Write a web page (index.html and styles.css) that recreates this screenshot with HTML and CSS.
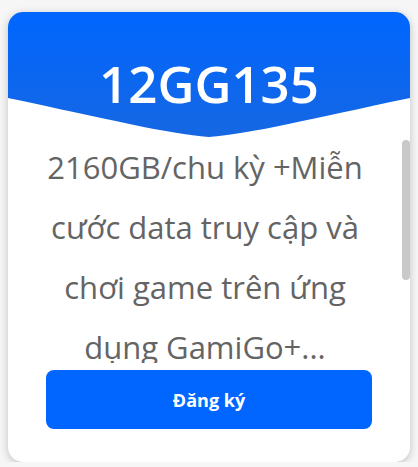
FILE: index.html
```html
<!DOCTYPE html>
<html lang="vi">

<head>
    <meta charset="UTF-8">
    <meta name="viewport" content="width=device-width, initial-scale=1.0">
    <title>12GG135</title>
    <link rel="stylesheet" href="styles.css">
</head>

<body>
    <div class="card">
        <div class="card-head">
            <h2>12GG135</h2>
        </div>
        <div class="card-body">
            <p>2160GB/chu kỳ +Miễn cước data truy cập và chơi game trên ứng dụng GamiGo+...</p>
        </div>
        <span class="scroll-thumb"></span>
        <div class="card-foot">
            <button class="btn">Đăng ký</button>
        </div>
    </div>
</body>

</html>
```

FILE: styles.css
```css
* {
    box-sizing: border-box;
    margin: 0;
    padding: 0;
}

body {
    background: #f6f6f6;
    padding: 12px 8px 0;
    font-family: "Open Sans", "Liberation Sans", sans-serif;
}

.card {
    position: relative;
    width: 402px;
    height: 450px;
    background: #fff;
    border-radius: 15px;
    box-shadow: 0 2px 8px rgba(0, 0, 0, 0.22);
    overflow: hidden;
    display: flex;
    flex-direction: column;
}

.card-head {
    height: 125px;
    flex-shrink: 0;
    background: linear-gradient(#0066ff, #1667e2);
    clip-path: path("M0,0 H402 V86 C302,107 242,122 201,125 C160,122 100,107 0,86 Z");
    display: flex;
    justify-content: center;
    padding-top: 37px;
}

.card-head h2 {
    color: #fff;
    font-size: 51px;
    font-weight: 600;
    line-height: 68px;
    height: 68px;
}

.card-body {
    height: 226px;
    flex-shrink: 0;
    overflow: hidden;
    padding-right: 8px;
}

.card-body p {
    padding: 0 22px;
    color: #646464;
    font-size: 31px;
    line-height: 60px;
    text-align: center;
}

/* fake scrollbar thumb, headless hides the real one */
.scroll-thumb {
    position: absolute;
    top: 128px;
    right: 0;
    width: 8px;
    height: 140px;
    border-radius: 4px;
    background: #c9c9c9;
}

.card-foot {
    padding: 7px 38px 0;
}

.btn {
    display: block;
    width: 100%;
    height: 59px;
    border: none;
    border-radius: 8px;
    background: #0066ff;
    color: #fff;
    font-family: inherit;
    font-size: 18px;
    font-weight: 700;
}
```
